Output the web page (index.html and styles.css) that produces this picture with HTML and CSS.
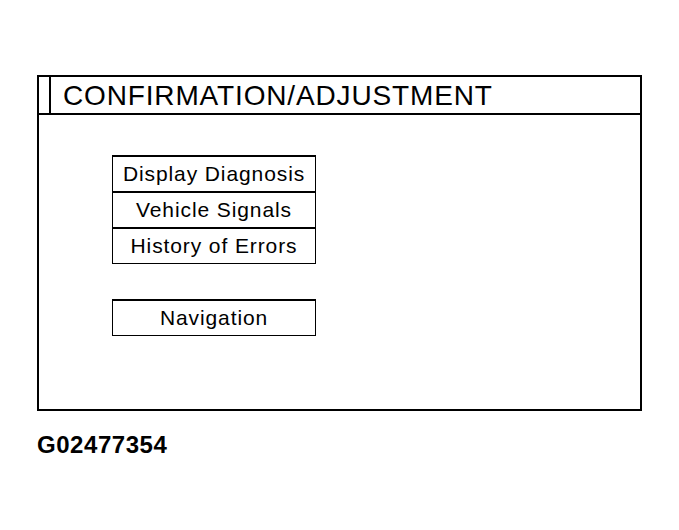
FILE: index.html
```html
<!DOCTYPE html>
<html>
<head>
<meta charset="utf-8">
<link rel="stylesheet" href="styles.css">
</head>
<body>
<div class="page">
  <div class="panel">
    <div class="panel-head">
      <div class="head-tab"></div>
      <div class="head-title">CONFIRMATION/ADJUSTMENT</div>
    </div>
    <div class="panel-body">
      <div class="btn-group">
        <div class="btn">Display Diagnosis</div>
        <div class="btn">Vehicle Signals</div>
        <div class="btn">History of Errors</div>
      </div>
      <div class="btn-group single">
        <div class="btn">Navigation</div>
      </div>
    </div>
  </div>
  <div class="caption">G02477354</div>
</div>
</body>
</html>
```
FILE: styles.css
```css
html, body {
  margin: 0;
  padding: 0;
  background: #fff;
}
body {
  font-family: "Liberation Sans", Arial, sans-serif;
  color: #000;
}
.page {
  padding: 75px 0 0 37px;
}
.panel {
  width: 601px;
  height: 332px;
  border: 2px solid #000;
  display: flex;
  flex-direction: column;
}
.panel-head {
  display: flex;
  height: 36px;
  border-bottom: 2px solid #000;
}
.head-tab {
  width: 10px;
  border-right: 2px solid #000;
}
.head-title {
  padding-left: 12px;
  font-size: 28px;
  letter-spacing: 0.85px;
  line-height: 36px;
  padding-top: 1px;
}
.panel-body {
  padding: 40px 0 0 73px;
  display: flex;
  flex-direction: column;
  gap: 35px;
}
.btn-group {
  width: 202px;
  border-left: 1px solid #000;
  border-right: 1px solid #000;
  border-top: 2px solid #000;
  border-bottom: 1px solid #000;
}
.btn {
  height: 34px;
  line-height: 34px;
  box-sizing: border-box;
  text-align: center;
  font-size: 21px;
  letter-spacing: 0.9px;
}
.btn + .btn {
  border-top: 2px solid #000;
  height: 36px;
}
.caption {
  margin-top: 20px;
  font-size: 24px;
  line-height: 28px;
  font-weight: bold;
  letter-spacing: 0.55px;
}
```
